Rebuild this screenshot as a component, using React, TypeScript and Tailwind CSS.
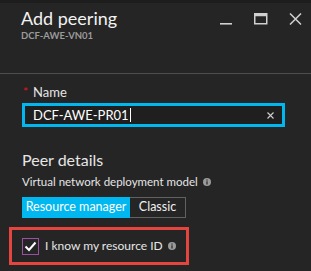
import React from "react";

const font = { fontFamily: 'Lato, "Open Sans", sans-serif' };

function Info({ className = "" }: { className?: string }) {
  return (
    <svg width="8" height="8" viewBox="0 0 8 8" className={className}>
      <circle cx="4" cy="4" r="4" fill="#9a9a9a" />
      <rect x="3.4" y="3.3" width="1.2" height="3.2" fill="#252525" />
      <rect x="3.4" y="1.5" width="1.2" height="1.1" fill="#252525" />
    </svg>
  );
}

export default function App() {
  return (
    <div
      className="w-[311px] h-[271px] bg-[#252525] overflow-hidden text-[#e6e6e6] whitespace-nowrap"
      style={font}
    >
      <div className="h-[3px] bg-[#1d1d1d]" />
      <div className="flex justify-between pl-[21px] pr-[9px] h-[70px]">
        <div className="pt-[4px]">
          <div className="text-[18px] leading-[22px] text-[#f2f2f2]">Add peering</div>
          <div className="text-[9.5px] leading-[12px] font-bold text-[#9a9a9a] mt-[1px]">
            DCF-AWE-VN01
          </div>
        </div>
        <div className="flex items-start gap-[21px] pt-[10px]">
          <svg width="13" height="13" viewBox="0 0 13 13">
            <rect x="0" y="10" width="12" height="1.6" fill="#d0d0d0" />
          </svg>
          <svg width="14" height="12" viewBox="0 0 14 12">
            <rect x="0.75" y="0.75" width="12" height="10" fill="none" stroke="#d0d0d0" strokeWidth="1.5" />
            <rect x="0.75" y="0.75" width="12" height="2.5" fill="#d0d0d0" />
          </svg>
          <svg width="13" height="12" viewBox="0 0 13 12">
            <path d="M1 0.5 L12 11.5 M12 0.5 L1 11.5" stroke="#d0d0d0" strokeWidth="1.5" />
          </svg>
        </div>
      </div>
      <div className="h-px bg-[#4d4d4d]" />
      <div className="px-[22px] pt-[10px]">
        <div className="flex items-center text-[13px] leading-[16px]">
          <span className="text-[#e81123] w-[11px] pl-[1px] text-[12px]">*</span>
          <span className="text-[#e6e6e6]">Name</span>
        </div>
        <div className="mt-[3px] w-[263px] h-[24px] border-[3px] border-[#00b7f0] bg-[#1f1f1f] flex items-center pl-[8px] pr-[8px]">
          <span className="text-[13px] text-white leading-none">DCF-AWE-PR01</span>
          <span className="w-px h-[14px] bg-white ml-[1px]" />
          <svg width="7" height="7" viewBox="0 0 7 7" className="ml-auto">
            <path d="M0.5 0.5 L6.5 6.5 M6.5 0.5 L0.5 6.5" stroke="#cfcfcf" strokeWidth="1.1" />
          </svg>
        </div>
        <div className="mt-[23px] text-[16px] leading-[20px] text-[#e6e6e6]">Peer details</div>
        <div className="mt-[5px] flex items-center gap-[5px] text-[11.5px] leading-[14px]">
          <span>Virtual network deployment model</span>
          <Info />
        </div>
        <div className="mt-[8px] flex h-[21px] w-[164px] text-[12.5px] leading-none">
          <div className="bg-[#00b7f0] text-white flex items-center justify-center w-[108px]">
            Resource manager
          </div>
          <div className="flex-1 border border-[#616161] border-l-0 flex items-center justify-center text-[#f0f0f0]">
            Classic
          </div>
        </div>
      </div>
      <div className="ml-[9px] mt-[9px] w-[180px] h-[38px] border-[3px] border-[#e5453f] flex items-center pl-[10px] gap-[6px]">
        <div className="w-[17px] h-[17px] border border-[#9c4fa0] flex items-center justify-center">
          <svg width="13" height="11" viewBox="0 0 13 11">
            <path d="M1.5 5.5 L5 9 L11.5 1.5" fill="none" stroke="#ffffff" strokeWidth="2" />
          </svg>
        </div>
        <span className="text-[12px] leading-none text-[#e6e6e6]">I know my resource ID</span>
        <Info className="ml-[-1px]" />
      </div>
    </div>
  );
}
